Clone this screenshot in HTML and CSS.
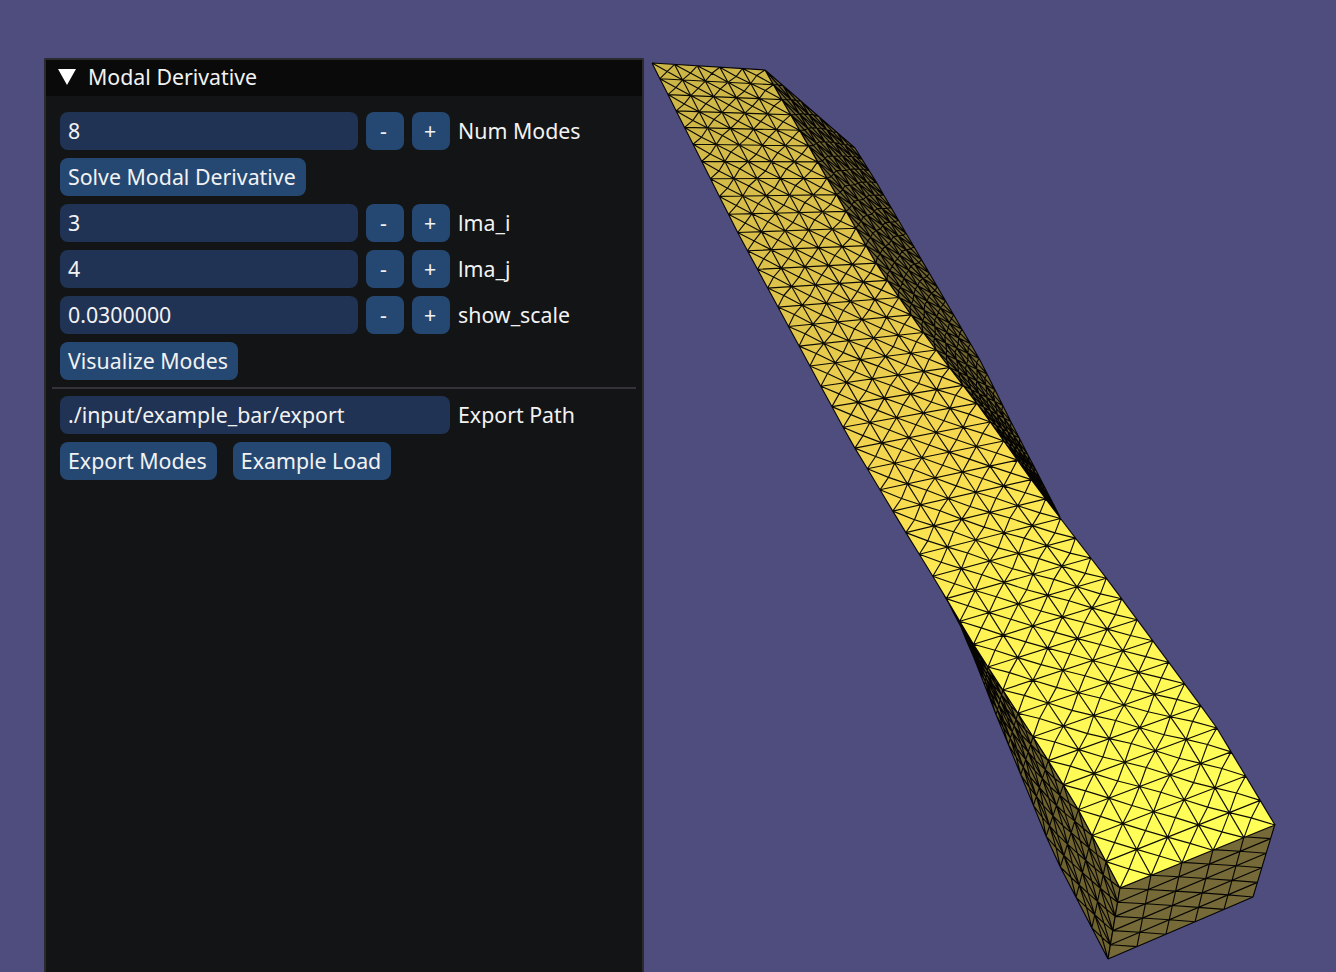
FILE: index.html
```html
<!DOCTYPE html>
<html lang="en">
<head>
<meta charset="utf-8">
<title>Modal Derivative</title>
<link rel="stylesheet" href="styles.css">
<script src="mesh.js" defer></script>
</head>
<body>
<div class="stage">
  <section class="panel">
    <header class="titlebar"><span class="arrow"></span><span class="title">Modal Derivative</span></header>
    <div class="content">
      <div class="row"><div class="field">8</div><button class="btn step minus">-</button><button class="btn step">+</button><span class="label">Num Modes</span></div>
      <div class="row"><button class="btn">Solve Modal Derivative</button></div>
      <div class="row"><div class="field">3</div><button class="btn step minus">-</button><button class="btn step">+</button><span class="label">lma_i</span></div>
      <div class="row"><div class="field">4</div><button class="btn step minus">-</button><button class="btn step">+</button><span class="label">lma_j</span></div>
      <div class="row"><div class="field">0.0300000</div><button class="btn step minus">-</button><button class="btn step">+</button><span class="label">show_scale</span></div>
      <div class="row"><button class="btn">Visualize Modes</button></div>
      <div class="sep"></div>
      <div class="row"><div class="field wide">./input/example_bar/export</div><span class="label">Export Path</span></div>
      <div class="row"><button class="btn">Export Modes</button><button class="btn">Example Load</button></div>
    </div>
  </section>
</div>
<svg class="mesh" id="mesh" viewBox="0 0 1336 972" width="1336" height="972" aria-hidden="true">
  <defs>
    <linearGradient id="topShade" gradientUnits="userSpaceOnUse" x1="700" y1="70" x2="1190" y2="850">
      <stop offset="0" stop-color="#cdb648"/>
      <stop offset="0.3" stop-color="#e2c64c"/>
      <stop offset="0.5" stop-color="#f8da50"/>
      <stop offset="0.66" stop-color="#fff254"/>
      <stop offset="1" stop-color="#ffff58"/>
    </linearGradient>
  </defs>
</svg>
</body>
</html>
```
FILE: styles.css
```css
html, body { margin: 0; height: 100%; }
body { position: relative; background: #4f4d7e; overflow: hidden; font-family: "Noto Sans", "Open Sans", sans-serif; font-size: 21.33px; color: #f2f2f2; }
.stage { padding: 58px 0 0 44px; }
.panel { width: 600px; height: 930px; border: 2px solid #2b2b2f; border-bottom: 0; border-radius: 2px 2px 0 0; background: #131416; box-sizing: border-box; }
.titlebar { height: 36px; background: #0a0a0a; display: flex; align-items: center; gap: 12px; padding-left: 12px; }
.arrow { width: 0; height: 0; margin-bottom: 2px; border-left: 9.5px solid transparent; border-right: 9.5px solid transparent; border-top: 16px solid #fff; }
.title { margin-bottom: 4px; }
.content { padding: 16px 6px 0 14px; display: flex; flex-direction: column; gap: 8px; }
.row { display: flex; height: 38px; align-items: center; gap: 8px; }
.field { width: 298px; height: 38px; line-height: 38px; background: #203354; border-radius: 8px; padding-left: 8px; box-sizing: border-box; }
.wide { width: 390px; }
.btn { height: 38px; padding: 0 10px 1px 8px; background: #254873; border: 0; border-radius: 8px; color: inherit; font: inherit; }
.step { width: 38px; padding: 0 2px 2px 0; }
.minus { padding-right: 3px; }
.label { margin-bottom: 2px; }
.row .btn + .btn:not(.step) { margin-left: 8px; }
.sep { height: 2px; background: #35323a; margin: -1px 0 -1px -8px; }
.mesh { position: absolute; left: 0; top: 0; }
.top-fill { fill: url(#topShade); }
.side-fill { fill: #6f6330; }
.end-fill { fill: #756a38; }
.wire { fill: none; stroke: #000; stroke-width: 1.15; stroke-opacity: 0.95; stroke-linejoin: round; }
```
FILE: mesh.js
```js
(function () {
  var svg = document.getElementById('mesh');
  var NS = 'http://www.w3.org/2000/svg';
  var ROWS = 40, COLS = 5;

  var L = [[652,63],[740,237],[850,440],[900,523],[937,583],[977,650],[1043,752],[1077,807],[1120,888]];
  var R = [[765,70],[828,180],[880,270],[927,338],[978,405],[1033,482],[1057,514],[1110,583],[1215,725],[1275,825]];
  var U = [[855,148],[875,180],[980,360],[1010,420],[1060,517]];
  var O = [[945,595],[965,635],[997,717],[1030,797],[1053,853],[1108,959]];

  function mix(a, b, f) { return [a[0] + (b[0] - a[0]) * f, a[1] + (b[1] - a[1]) * f]; }
  function len(a, b) { return Math.hypot(a[0] - b[0], a[1] - b[1]); }
  function total(p) { var s = 0; for (var i = 1; i < p.length; i++) s += len(p[i - 1], p[i]); return s; }
  function at(p, f) {
    var d = Math.min(1, Math.max(0, f)) * total(p);
    for (var i = 1; i < p.length; i++) {
      var s = len(p[i - 1], p[i]);
      if (d <= s) return mix(p[i - 1], p[i], d / s);
      d -= s;
    }
    return p[p.length - 1];
  }
  function depth(i) { var u = i / ROWS; return 0.734 * u + 0.266 * u * u; }
  function pt(p) { return p[0].toFixed(1) + ' ' + p[1].toFixed(1); }
  function jitter(i, j, k) { return Math.sin(i * 12.9 + j * 78.2 + k * 37.7) * 1.2; }

  function add(d, cls) {
    var el = document.createElementNS(NS, 'path');
    el.setAttribute('d', d);
    el.setAttribute('class', cls);
    svg.appendChild(el);
  }

  function face(A, B, cols, fill, split) {
    var n = A.length, d = '', i, j;
    var P = function (r, c) { return mix(A[r], B[r], c / cols); };
    var outline = 'M' + A.map(pt).join('L') + 'L' + B.slice().reverse().map(pt).join('L') + 'Z';
    add(outline, fill);
    for (i = 0; i < n; i++) d += 'M' + pt(A[i]) + 'L' + pt(B[i]);
    for (j = 0; j <= cols; j++) {
      d += 'M' + pt(P(0, j));
      for (i = 1; i < n; i++) d += 'L' + pt(P(i, j));
    }
    for (i = 0; i < n - 1; i++) {
      for (j = 0; j < cols; j++) {
        var a = P(i, j), b = P(i, j + 1), c = P(i + 1, j + 1), e = P(i + 1, j);
        if (split) {
          var m = mix(a, c, 0.5);
          m = [m[0] + jitter(i, j, 1), m[1] + jitter(i, j, 2)];
          d += 'M' + pt(a) + 'L' + pt(m) + 'L' + pt(c) + 'M' + pt(b) + 'L' + pt(m) + 'L' + pt(e);
        } else {
          d += 'M' + pt(a) + 'L' + pt(c);
        }
      }
    }
    add(d, 'wire');
  }

  var i, A, B, t;

  /* far side face, seen at a grazing angle along the upper right */
  var tm = 0.581;
  A = []; B = [];
  for (i = 0; i <= ROWS; i++) {
    t = depth(i);
    if (t >= tm) break;
    A.push(at(R, t));
    B.push(at(U, t / tm));
  }
  A.push(at(R, tm)); B.push(at(U, 1));
  face(A, B, COLS, 'side-fill', true);

  /* near side face along the lower left */
  var tb = 0.64;
  A = [at(L, tb)]; B = [at(O, 0)];
  for (i = 0; i <= ROWS; i++) {
    t = depth(i);
    if (t <= tb) continue;
    A.push(at(L, t));
    B.push(at(O, (t - tb) / (1 - tb)));
  }
  face(A, B, COLS, 'side-fill', true);

  /* end cap */
  A = []; B = [];
  for (i = 0; i <= COLS; i++) {
    A.push(mix([1120, 888], [1108, 959], i / COLS));
    B.push(mix([1275, 824], [1253, 897], i / COLS));
  }
  face(A, B, COLS, 'end-fill', false);

  /* main lit face */
  A = []; B = [];
  for (i = 0; i <= ROWS; i++) {
    t = depth(i);
    A.push(at(L, t));
    B.push(at(R, t));
  }
  face(A, B, COLS, 'top-fill', true);
})();
```
